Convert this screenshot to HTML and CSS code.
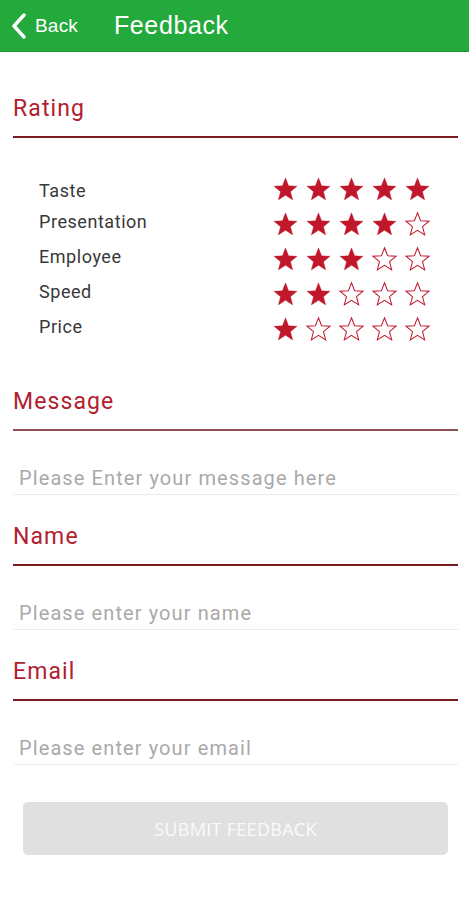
FILE: index.html
```html
<!DOCTYPE html>
<html>
<head>
<meta charset="utf-8">
<link rel="stylesheet" href="styles.css">
</head>
<body>
<header class="topbar">
  <div class="back">
    <svg class="chev" width="16" height="26" viewBox="0 0 16 26"><path d="M13 2 L3 13 L13 24" fill="none" stroke="#fff" stroke-width="3.4" stroke-linecap="round" stroke-linejoin="round"/></svg>
    <span class="back-text">Back</span>
  </div>
  <div class="title">Feedback</div>
</header>
<svg width="0" height="0" class="defs">
  <defs>
    <path id="star" d="M12 1.6l2.75 7.05 7.55.45-5.85 4.8 1.95 7.35L12 17.2l-6.4 4.05 1.95-7.35L1.7 9.1l7.55-.45z"/>
  </defs>
</svg>
<main class="content">
  <div class="section-title first">Rating</div>
  <div class="ratings" id="ratings"></div>

  <div class="section-title muted">Message</div>
  <div class="field">Please Enter your message here</div>

  <div class="section-title">Name</div>
  <div class="field">Please enter your name</div>

  <div class="section-title">Email</div>
  <div class="field">Please enter your email</div>

  <button class="submit">SUBMIT FEEDBACK</button>
</main>
<script>
  var data=[["Taste",5],["Presentation",4],["Employee",3],["Speed",2],["Price",1]];
  var html="";
  data.forEach(function(d){
    html+='<div class="label">'+d[0]+'</div><div class="stars">';
    for(var i=0;i<5;i++){
      html+='<svg class="star '+(i<d[1]?'on':'off')+'" width="27" height="27" viewBox="0 0 24 24"><use href="#star"/></svg>';
    }
    html+='</div>';
  });
  document.getElementById("ratings").innerHTML=html;
</script>
</body>
</html>
```

FILE: styles.css
```css
* { box-sizing: border-box; }
html, body { margin: 0; padding: 0; background: #fff; }
body { font-family: Roboto, "Noto Sans", "Liberation Sans", sans-serif; width: 469px; }
.defs { position: absolute; }

.topbar {
  height: 52px;
  background: #23a93c;
  border-bottom: 1px solid #1e9a35;
  display: flex;
  align-items: center;
  color: #fff;
}
.back { display: flex; align-items: center; padding-left: 11px; width: 114px; }
.chev { display: block; margin-right: 8px; }
.back-text { font-family: "Liberation Sans", Arial, sans-serif; font-size: 19px; letter-spacing: 0.2px; }
.title { font-family: "Liberation Sans", Arial, sans-serif; font-size: 25px; letter-spacing: 0.6px; }

.content { padding: 0 11px 0 13px; }

.section-title {
  color: #b1202e;
  font-size: 23px;
  letter-spacing: 1.1px;
  line-height: 26px;
  height: 71px;
  padding-top: 29px;
  padding-bottom: 14px;
  border-bottom: 2px solid #7a1a22;
}
.section-title.first { padding-top: 44px; height: 86px; }
.section-title.muted { padding-top: 42px; height: 84px; border-bottom-color: #8e5055; }

.ratings {
  display: grid;
  grid-template-columns: 233px auto;
  grid-auto-rows: 35px;
  padding: 34px 0 0 26px;
  align-items: center;
}
.label { color: #383838; font-size: 18px; letter-spacing: 0.55px; line-height: 20px; margin-bottom: 5px; }
.ratings .label:first-child { margin-bottom: 0; margin-top: 3px; }
.stars { display: flex; gap: 6px; }
.star { display: block; }
.star.on use { fill: #c0172b; stroke: #c0172b; stroke-width: 0.3; }
.star.off use { fill: none; stroke: #c0172b; stroke-width: 0.9; }

.field {
  height: 64px;
  padding: 35px 0 4px 5px;
  border-bottom: 1px solid #ececec;
  margin-left: 1px;
  font-size: 20px;
  line-height: 24px;
  letter-spacing: 1.1px;
  color: #a9a9a9;
  white-space: nowrap;
}

.submit {
  display: block;
  width: 425px;
  height: 53px;
  margin: 37px 0 0 10px;
  background: #e0e0e0;
  border: none;
  border-radius: 5px;
  color: #fafafa;
  font-family: "Open Sans", "Liberation Sans", sans-serif;
  font-size: 18px;
  letter-spacing: 0.3px;
}
```
